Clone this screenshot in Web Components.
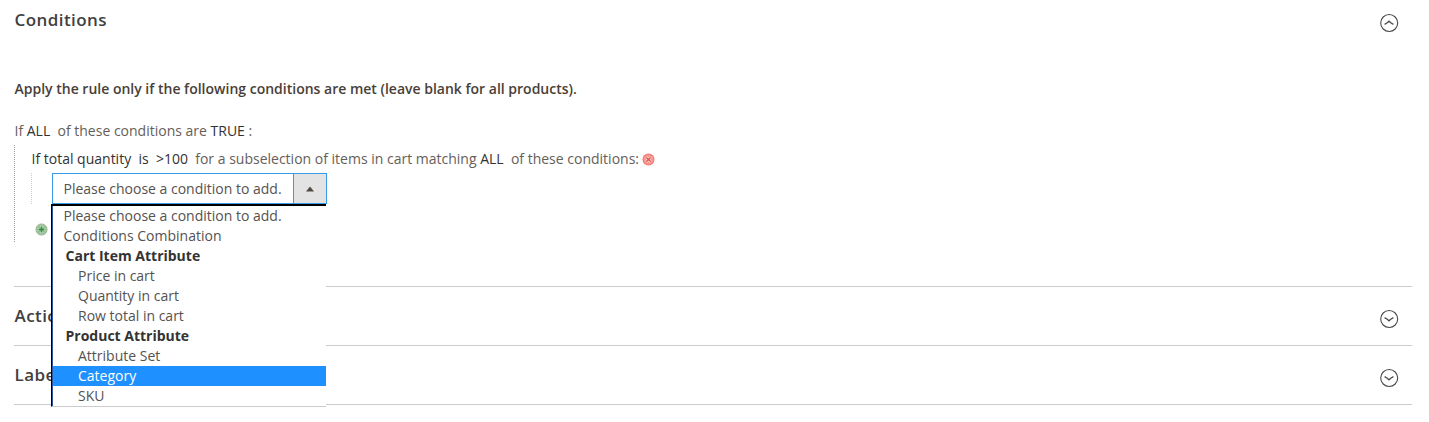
<!DOCTYPE html>
<html lang="en">
<head>
<meta charset="utf-8">
<title>Cart Price Rule</title>
<style>
html,body{margin:0;background:#fff}
body{width:1429px;height:422px;overflow:hidden;font-family:"Open Sans","Noto Sans",sans-serif}
</style>
</head>
<body>
<rule-page></rule-page>
<script>
const define=(name,html,init)=>customElements.define(name,class extends HTMLElement{
  connectedCallback(){
    if(this.shadowRoot)return;
    const t=document.createElement('template');
    t.innerHTML=html;
    this.attachShadow({mode:'open'}).append(t.content.cloneNode(true));
    if(init)init(this,this.shadowRoot);
  }
});

define('chevron-toggle',`<style>:host{display:block;width:20px;height:20px}svg{display:block}:host([open]) path{transform:rotate(180deg);transform-origin:10px 10px}</style>
<svg width="20" height="20" viewBox="0 0 20 20" fill="none" stroke="#4a4745"><circle cx="10.2" cy="10" r="8.5" stroke-width="1.1"/><path d="M5.6 8.7Q8 9.8 10 11.8Q12 9.8 14.4 8.7" stroke-width="1.3"/></svg>`);

define('section-panel',`<style>
:host{display:block;box-sizing:border-box;border-bottom:1px solid #ccc;height:59px}
header{display:flex;justify-content:space-between;align-items:flex-start;padding:18px 13px 0 .5px}
h2{margin:0;font-size:17px;font-weight:600;line-height:22px;color:#41403f;letter-spacing:.43px}
chevron-toggle{margin-top:4px}
:host([open]){height:287px}
:host([open]) header{padding-top:9px}
</style><header><h2><slot name="title"></slot></h2><chevron-toggle></chevron-toggle></header><slot></slot>`,
(host,root)=>{if(host.hasAttribute('open'))root.querySelector('chevron-toggle').setAttribute('open','')});

define('icon-remove',`<style>:host{display:block;width:13px;height:13px}svg{display:block}</style>
<svg width="13" height="13" viewBox="0 0 13 13"><circle cx="6.5" cy="6.5" r="6" fill="#ee7069"/><circle cx="6.5" cy="6.5" r="4.6" fill="#f3918b" stroke="#f6aaa4" stroke-width=".8"/><path d="M4.2 4.2l4.6 4.6M8.8 4.2L4.2 8.8" stroke="#fcdcd9" stroke-width="2.8"/><path d="M4.4 4.4l4.2 4.2M8.6 4.4L4.4 8.6" stroke="#e0524d" stroke-width="1.4"/></svg>`);

define('icon-add',`<style>:host{display:block;width:13px;height:13px}svg{display:block}</style>
<svg width="13" height="13" viewBox="0 0 13 13"><circle cx="6.5" cy="6.5" r="5.5" fill="#8dbf8b" stroke="#8fa98f"/><circle cx="6.5" cy="6.5" r="4.6" fill="none" stroke="#b4d3b1" stroke-width=".8"/><path d="M6.5 3v7M3 6.5h7" stroke="#d3e9cf" stroke-width="3.2"/><path d="M6.5 3.5v6M3.5 6.5h6" stroke="#398c43" stroke-width="1.8"/></svg>`);

define('rule-param',`<style>:host{color:#333231}</style><slot></slot>`);

define('select-option',`<style>
:host{display:block;box-sizing:border-box;height:20px;line-height:20px;padding-left:10.5px;color:#555250;white-space:nowrap}
:host([child]){padding-left:25px}
:host([group]){padding-left:12.5px;font-weight:700;color:#333}
:host([selected]){background:#1e90ff;color:#fff}
</style><slot></slot>`);

define('condition-select',`<style>
:host{display:block;position:relative;width:275px;height:31px;font-size:14px}
.box{box-sizing:border-box;display:flex;height:31px;border:1px solid #379be8}
.value{flex:1;padding-left:10.5px;line-height:30px;color:#555250;white-space:nowrap}
.arrow{width:32px;background:#e3e3e3;border-left:1px solid #379be8;display:flex;align-items:center;justify-content:center}
.menu{position:absolute;z-index:2;left:-1px;top:31px;box-sizing:border-box;width:275px;height:203px;overflow:hidden;background:#fff;border-left:1px solid #000;border-top:2px solid #000;border-bottom:1px solid #ccc}
.inner{border-left:1px solid #2d55a0}
</style>
<div class="box"><div class="value">Please choose a condition to add.</div><div class="arrow"><svg width="8" height="6" viewBox="0 0 8 6"><path d="M0 5.5L4 .5L8 5.5z" fill="#514943"/></svg></div></div>
<div class="menu"><div class="inner"><slot></slot></div></div>`);

define('condition-tree',`<style>
:host{display:block;font-size:14px;line-height:20px;color:#655e59}
.intro{margin-top:46px;padding-left:.5px;font-weight:600;color:#483e38}
.root{margin-top:22px;padding-left:.5px;white-space:pre}
.children{margin-top:4px;height:97px;box-sizing:border-box;border-left:1px dotted #999;padding:4px 0 0 16px}
.line{display:flex;align-items:center;height:20px}
.text{white-space:pre;padding-left:.5px}
icon-remove{margin:1px 0 0 3px}
.nested{display:flex;margin-top:4px;height:31px;border-left:1px dotted #ccc;padding-left:20px}
icon-add{margin:19px 0 0 4px}
</style>
<div class="intro">Apply the rule only if the following conditions are met (leave blank for all products).</div>
<div class="root">If <rule-param>ALL</rule-param>  of these conditions are <rule-param>TRUE</rule-param> :</div>
<div class="children"><div class="line"><span class="text"><rule-param>If total quantity</rule-param>  <rule-param>is</rule-param>  <rule-param>&gt;100</rule-param>  for a subselection of items in cart matching <rule-param>ALL</rule-param>  of these conditions:</span><icon-remove></icon-remove></div>
<div class="nested"><slot></slot></div><icon-add></icon-add></div>`);

define('rule-page',`<style>:host{display:block;margin-left:14px;width:1398px}</style>
<section-panel open><span slot="title">Conditions</span>
<condition-tree><condition-select>
<select-option>Please choose a condition to add.</select-option>
<select-option>Conditions Combination</select-option>
<select-option group>Cart Item Attribute</select-option>
<select-option child>Price in cart</select-option>
<select-option child>Quantity in cart</select-option>
<select-option child>Row total in cart</select-option>
<select-option group>Product Attribute</select-option>
<select-option child>Attribute Set</select-option>
<select-option child selected>Category</select-option>
<select-option child>SKU</select-option>
</condition-select></condition-tree></section-panel>
<section-panel><span slot="title">Actions</span></section-panel>
<section-panel><span slot="title">Labels</span></section-panel>`);
</script>
</body>
</html>
